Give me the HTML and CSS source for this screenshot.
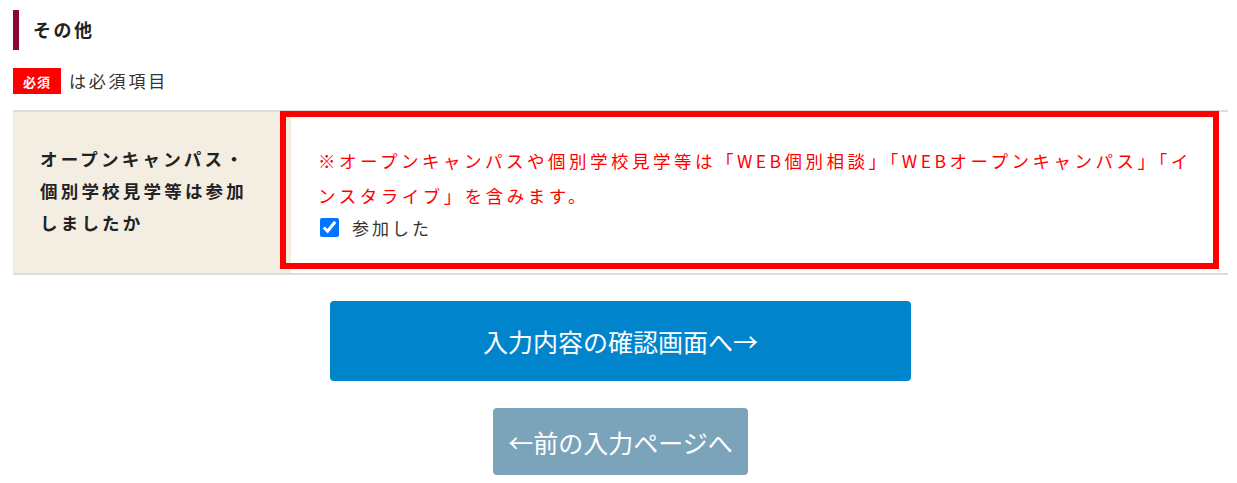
FILE: index.html
```html
<!DOCTYPE html>
<html lang="ja">
<head>
<meta charset="utf-8">
<title>その他</title>
<link rel="stylesheet" href="styles.css">
</head>
<body>
<div class="page">
  <h2 class="section-title">その他</h2>
  <p class="required-note"><span class="badge">必須</span><span class="note-text">は必須項目</span></p>
  <div class="form-table">
    <div class="form-row">
      <div class="form-label">オープンキャンパス・個別学校見学等は参加しましたか</div>
      <div class="form-field">
        <p class="field-note">※オープンキャンパスや個別学校見学等は「WEB個別相談」「WEBオープンキャンパス」「インスタライブ」を含みます。</p>
        <label class="check"><input type="checkbox" checked><span>参加した</span></label>
      </div>
    </div>
    <div class="highlight"></div>
  </div>
  <div class="actions">
    <button class="btn btn-primary" type="button">入力内容の確認画面へ→</button>
    <button class="btn btn-back" type="button">←前の入力ページへ</button>
  </div>
</div>
</body>
</html>
```
FILE: styles.css
```css
* { box-sizing: border-box; }
html, body { margin: 0; padding: 0; background: #fff; }
body {
  font-family: "Noto Sans CJK JP", "Noto Sans", sans-serif;
  color: #222;
}
.page {
  width: 1237px;
  padding: 0 9px 0 13px;
}
.section-title {
  margin: 10px 0 0;
  height: 40px;
  border-left: 6px solid #8c0a30;
  padding-left: 14px;
  display: flex;
  align-items: center;
  font-size: 18px;
  font-weight: bold;
  letter-spacing: 2.5px;
  color: #222;
  padding-bottom: 3px;
}
.required-note {
  margin: 18px 0 0;
  height: 26px;
  display: flex;
  align-items: center;
  gap: 8px;
}
.badge {
  width: 48px;
  height: 26px;
  background: #ff0000;
  color: #fff;
  font-size: 13px;
  font-weight: bold;
  display: flex;
  align-items: center;
  justify-content: center;
  letter-spacing: 1px;
}
.note-text {
  font-size: 17px;
  letter-spacing: 2.8px;
  color: #333;
  margin-bottom: 2px;
}
.form-table {
  position: relative;
  margin-top: 16px;
}
.form-row {
  display: grid;
  grid-template-columns: 278px 1fr;
  border-top: 2px solid #dcdcdc;
  border-bottom: 2px solid #dcdcdc;
}
.form-label {
  background: #f4eee2;
  min-height: 161px;
  padding: 0 27px 4px;
  display: flex;
  align-items: center;
  font-size: 17.5px;
  font-weight: bold;
  line-height: 32px;
  letter-spacing: 3.2px;
  color: #222;
}
.form-field {
  padding: 0 27px;
  display: flex;
  flex-direction: column;
  justify-content: center;
}
.field-note {
  margin: 0;
  color: #ff0000;
  font-size: 17.5px;
  line-height: 35px;
  letter-spacing: 3.5px;
}
.check {
  display: flex;
  align-items: center;
  height: 30px;
  font-size: 17px;
  letter-spacing: 3px;
  color: #333;
}
.check input {
  width: 19px;
  height: 19px;
  margin: 0 13px 0 2px;
  accent-color: #0075ff;
}
.highlight {
  position: absolute;
  left: 267px;
  top: 1px;
  width: 939px;
  height: 158px;
  border: 6px solid #ff0000;
  pointer-events: none;
}
.actions {
  display: flex;
  flex-direction: column;
  align-items: center;
}
.btn {
  border: none;
  border-radius: 4px;
  color: #fff;
  font-family: "Noto Sans CJK JP", "Noto Sans", sans-serif;
  font-size: 25px;
  cursor: pointer;
  padding: 0;
}
.btn-primary {
  margin-top: 26px;
  width: 581px;
  height: 80px;
  background: #0085cd;
}
.btn-back {
  margin-top: 27px;
  width: 255px;
  height: 67px;
  background: #7ba3ba;
}
```
